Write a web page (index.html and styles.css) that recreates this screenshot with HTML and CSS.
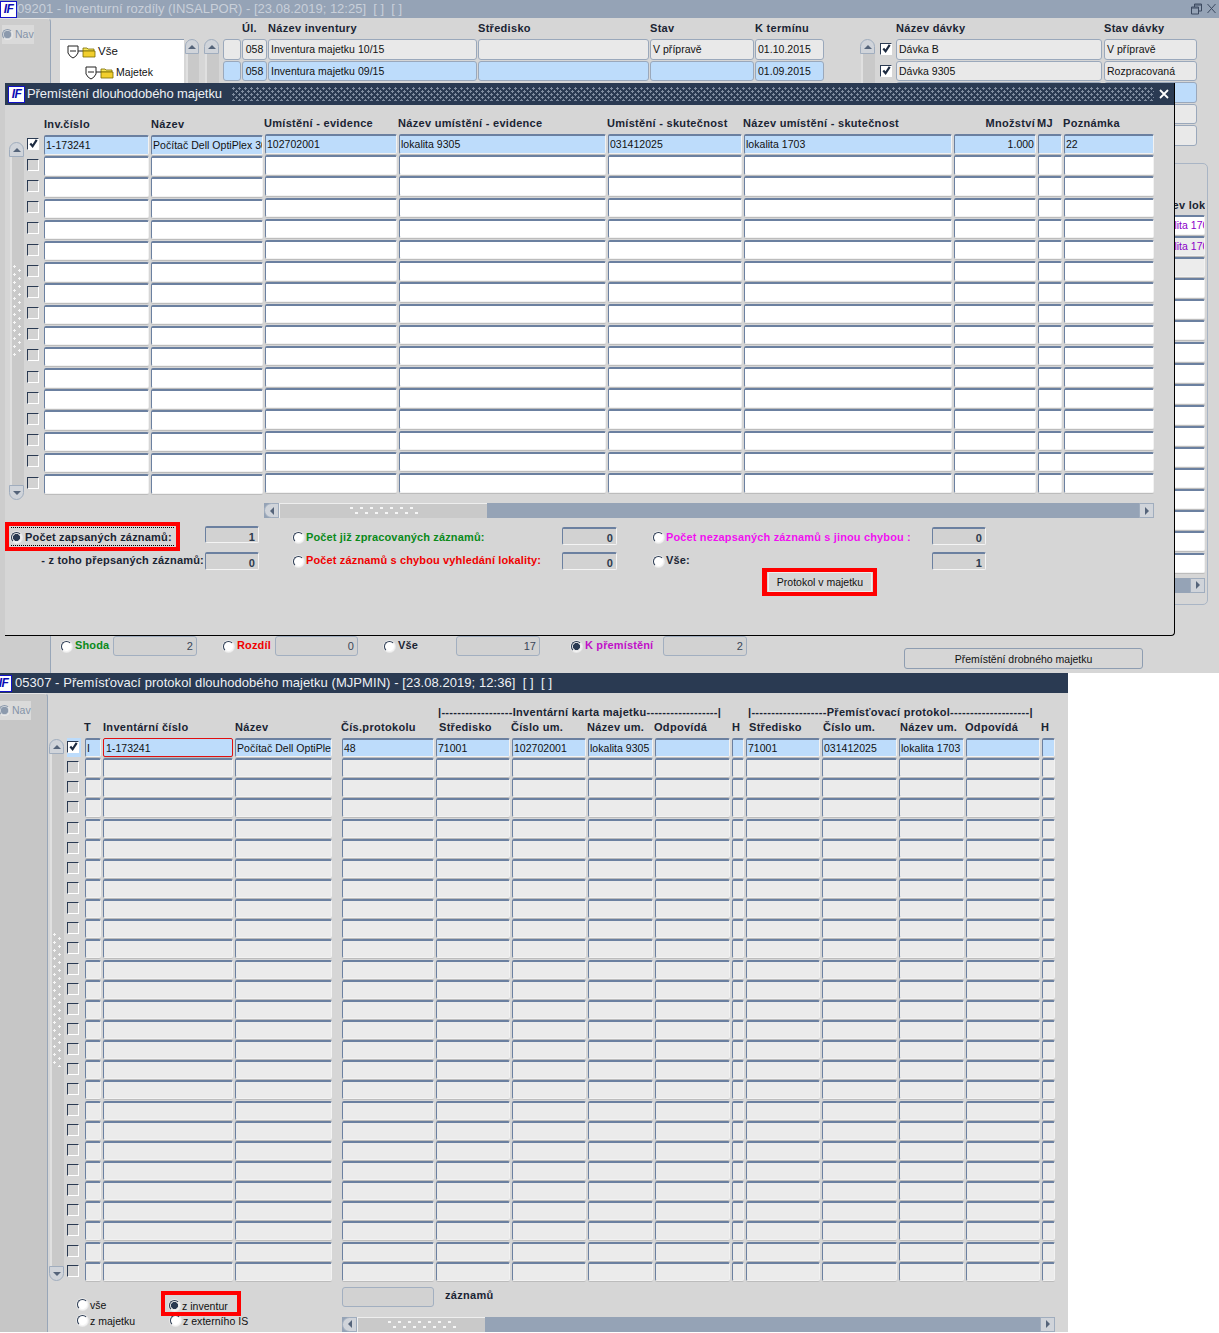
FILE: index.html
```html
<!DOCTYPE html>
<html lang="cs">
<head>
<meta charset="utf-8">
<title>Inventurní rozdíly</title>
<link rel="stylesheet" href="styles.css">
</head>
<body>
<div class="desk">

<section class="win win-top">
  <header class="tb tb-off"><span class="logo">IF</span><span class="tt">09201 - Inventurní rozdíly (INSALPOR) - [23.08.2019; 12:25]&nbsp; [ ]&nbsp; [ ]</span>
    <svg class="wbtn" viewBox="0 0 26 12"><path d="M1 4h7v7H1zM4 4V1h7v7H8M1 5h7M4 2h7"/><path d="M17 1l8 9M25 1l-8 9" /></svg>
  </header>
  <div class="wbody">
    <aside class="nav"><div class="navb"><span class="ra gray"></span>Nav</div></aside>
    <div class="main-top">
      <div class="upper">
        <div class="tree">
          <div class="node n0"><svg class="sh" viewBox="0 0 16 14"><path d="M1 1h10v7q-2 4-5 5q-3-1-5-5zM3 6h6M11 6h5"/></svg><svg class="fo" viewBox="0 0 14 12"><path class="f1" d="M1 2h4l1 1h6v2H1z"/><path class="f2" d="M1 11V5h12v6z"/></svg>Vše</div>
          <div class="node n1"><svg class="sh" viewBox="0 0 16 14"><path d="M1 1h10v7q-2 4-5 5q-3-1-5-5zM3 6h6M11 6h5"/></svg><svg class="fo" viewBox="0 0 14 12"><path class="f1" d="M1 2h4l1 1h6v2H1z"/><path class="f2" d="M1 11V5h12v6z"/></svg>Majetek</div>
        </div>
        <div class="vs vs-tree"><span class="au"></span><span class="tr"></span></div>
        <div class="vs vs-a"><span class="au"></span><span class="tr"></span></div>
        <div class="inv">
          <div class="ih"><b></b><b>Úl.</b><b>Název inventury</b><b>Středisko</b><b>Stav</b><b>K termínu</b></div>
          <div class="ir"><i></i><i>058</i><i>Inventura majetku 10/15</i><i></i><i>V přípravě</i><i>01.10.2015</i></div>
          <div class="ir sel"><i></i><i>058</i><i>Inventura majetku 09/15</i><i></i><i></i><i>01.09.2015</i></div>
        </div>
        <div class="vs vs-b"><span class="au"></span><span class="tr"></span></div>
        <div class="bat">
          <div class="bh"><b></b><b>Název dávky</b><b>Stav dávky</b></div>
          <div class="br2"><span class="cb on"><svg class="tick" viewBox="0 0 12 12"><path d="M2.5 6l2.5 3 4.5-7"/></svg></span><i>Dávka B</i><i>V přípravě</i></div>
          <div class="br2"><span class="cb on"><svg class="tick" viewBox="0 0 12 12"><path d="M2.5 6l2.5 3 4.5-7"/></svg></span><i>Dávka 9305</i><i>Rozpracovaná</i></div>
          <div class="br2 sel"><span></span><i></i><i></i></div>
          <div class="br2"><span></span><i></i><i></i></div>
          <div class="br2"><span></span><i></i><i></i></div>
        </div>
      </div>
      <div class="frame">
        <div class="fh">Název lokality</div>
        <div class="fr vio"><i>lokalita 1703</i></div>
        <div class="fr vio gr"><i>lokalita 1703</i></div>
        <div class="fr gr"><i></i></div>
        <div class="fr"><i></i></div><div class="fr"><i></i></div><div class="fr"><i></i></div><div class="fr"><i></i></div>
        <div class="fr"><i></i></div><div class="fr"><i></i></div><div class="fr"><i></i></div><div class="fr"><i></i></div>
        <div class="fr"><i></i></div><div class="fr"><i></i></div><div class="fr"><i></i></div><div class="fr"><i></i></div>
        <div class="fr"><i></i></div><div class="fr"><i></i></div>
        <div class="hs fhs"><span class="tk"></span><span class="ar"></span></div>
      </div>
      <div class="filt">
        <label class="rl lg"><span class="ra"></span>Shoda</label><span class="fld flat">2</span>
        <label class="rl lr"><span class="ra"></span>Rozdíl</label><span class="fld flat">0</span>
        <label class="rl"><span class="ra"></span>Vše</label><span class="fld flat">17</span>
        <label class="rl lm2"><span class="ra on"></span>K přemístění</label><span class="fld flat">2</span>
        <span></span><button class="btn btn-small">Přemístění drobného majetku</button>
      </div>
    </div>
  </div>
</section>

<section class="dlg">
  <header class="tb dtb"><span class="logo">IF</span><span class="tt">Přemístění dlouhodobého majetku</span><span class="pat"></span><svg class="dx" viewBox="0 0 10 10"><path d="M1 1l8 8M9 1l-8 8"/></svg></header>
  <div class="dtable">
    <div class="vs vs-d"><span class="au"></span><span class="tr"><span class="dots"></span></span><span class="ad"></span></div>
    <div class="dwrap">
      <div class="dg hd"><b></b><b class="lo">Inv.číslo</b><b class="lo">Název</b><b>Umístění - evidence</b><b>Název umístění - evidence</b><b>Umístění - skutečnost</b><b>Název umístění - skutečnost</b><b class="rt">Množství</b><b>MJ</b><b>Poznámka</b></div>
      <div class="dg r sel"><span class="cb on"><svg class="tick" viewBox="0 0 12 12"><path d="M2.5 6l2.5 3 4.5-7"/></svg></span><i class="lo">1-173241</i><i class="lo">Počítač Dell OptiPlex 3020</i><i>102702001</i><i>lokalita 9305</i><i>031412025</i><i>lokalita 1703</i><i class="rt">1.000</i><i></i><i>22</i></div>
      <div class="dg r"><span class="cb"></span><i class="lo"></i><i class="lo"></i><i></i><i></i><i></i><i></i><i></i><i></i><i></i></div>
      <div class="dg r"><span class="cb"></span><i class="lo"></i><i class="lo"></i><i></i><i></i><i></i><i></i><i></i><i></i><i></i></div>
      <div class="dg r"><span class="cb"></span><i class="lo"></i><i class="lo"></i><i></i><i></i><i></i><i></i><i></i><i></i><i></i></div>
      <div class="dg r"><span class="cb"></span><i class="lo"></i><i class="lo"></i><i></i><i></i><i></i><i></i><i></i><i></i><i></i></div>
      <div class="dg r"><span class="cb"></span><i class="lo"></i><i class="lo"></i><i></i><i></i><i></i><i></i><i></i><i></i><i></i></div>
      <div class="dg r"><span class="cb"></span><i class="lo"></i><i class="lo"></i><i></i><i></i><i></i><i></i><i></i><i></i><i></i></div>
      <div class="dg r"><span class="cb"></span><i class="lo"></i><i class="lo"></i><i></i><i></i><i></i><i></i><i></i><i></i><i></i></div>
      <div class="dg r"><span class="cb"></span><i class="lo"></i><i class="lo"></i><i></i><i></i><i></i><i></i><i></i><i></i><i></i></div>
      <div class="dg r"><span class="cb"></span><i class="lo"></i><i class="lo"></i><i></i><i></i><i></i><i></i><i></i><i></i><i></i></div>
      <div class="dg r"><span class="cb"></span><i class="lo"></i><i class="lo"></i><i></i><i></i><i></i><i></i><i></i><i></i><i></i></div>
      <div class="dg r"><span class="cb"></span><i class="lo"></i><i class="lo"></i><i></i><i></i><i></i><i></i><i></i><i></i><i></i></div>
      <div class="dg r"><span class="cb"></span><i class="lo"></i><i class="lo"></i><i></i><i></i><i></i><i></i><i></i><i></i><i></i></div>
      <div class="dg r"><span class="cb"></span><i class="lo"></i><i class="lo"></i><i></i><i></i><i></i><i></i><i></i><i></i><i></i></div>
      <div class="dg r"><span class="cb"></span><i class="lo"></i><i class="lo"></i><i></i><i></i><i></i><i></i><i></i><i></i><i></i></div>
      <div class="dg r"><span class="cb"></span><i class="lo"></i><i class="lo"></i><i></i><i></i><i></i><i></i><i></i><i></i><i></i></div>
      <div class="dg r"><span class="cb"></span><i class="lo"></i><i class="lo"></i><i></i><i></i><i></i><i></i><i></i><i></i><i></i></div>
      <div class="hs dhs"><span class="al"></span><span class="th th-d"><span class="dots dots-h"></span></span><span class="tk"></span><span class="ar"></span></div>
    </div>
  </div>
  <div class="stats">
    <div class="redbox focus"><label class="rl foc"><span class="ra on"></span>Počet zapsaných záznamů:</label></div>
    <span class="fld f1st">1</span>
    <label class="rl c3 lg"><span class="ra"></span>Počet již zpracovaných záznamů:</label>
    <span class="fld f2nd">0</span>
    <label class="rl c5 lm"><span class="ra"></span>Počet nezapsaných záznamů s jinou chybou :</label>
    <span class="fld f2nd">0</span>

    <span class="sub">- z toho přepsaných záznamů:</span>
    <span class="fld">0</span>
    <label class="rl c3 lr"><span class="ra"></span>Počet záznamů s chybou vyhledání lokality:</label>
    <span class="fld">0</span>
    <label class="rl c5"><span class="ra"></span>Vše:</label>
    <span class="fld">1</span>

    <div class="redbtn"><button class="btn">Protokol v majetku</button></div>
  </div>
</section>

<section class="win win-bot">
  <header class="tb"><span class="logo clip">IF</span><span class="tt">05307 - Přemísťovací protokol dlouhodobého majetku (MJPMIN) - [23.08.2019; 12:36]&nbsp; [ ]&nbsp; [ ]</span></header>
  <div class="wbody">
    <aside class="nav nav-b"><div class="navb"><span class="ra gray"></span>Nav</div></aside>
    <div class="main-bot">
      <div class="btable">
        <div class="vs vs-bt"><span class="au"></span><span class="tr"><span class="dots"></span></span><span class="ad"></span></div>
        <div class="bwrap">
          <div class="bg hd1"><b class="s1">|------------------Inventární karta majetku------------------|</b><b class="s2">|-------------------Přemísťovací protokol--------------------|</b></div>
          <div class="bg hd2"><b></b><b>T</b><b>Inventární číslo</b><b>Název</b><b>Čís.protokolu</b><b>Středisko</b><b>Číslo um.</b><b>Název um.</b><b>Odpovídá</b><b>H</b><b>Středisko</b><b>Číslo um.</b><b>Název um.</b><b>Odpovídá</b><b>H</b></div>
          <div class="bg r gy sel"><span class="cw"><span class="cb on"><svg class="tick" viewBox="0 0 12 12"><path d="M2.5 6l2.5 3 4.5-7"/></svg></span></span><i>I</i><i class="cur">1-173241</i><i>Počítač Dell OptiPlex 3020</i><i>48</i><i>71001</i><i>102702001</i><i>lokalita 9305</i><i></i><i></i><i>71001</i><i>031412025</i><i>lokalita 1703</i><i></i><i></i></div>
          <div class="bg r gy"><span class="cb"></span><i></i><i></i><i></i><i></i><i></i><i></i><i></i><i></i><i></i><i></i><i></i><i></i><i></i><i></i></div>
          <div class="bg r gy"><span class="cb"></span><i></i><i></i><i></i><i></i><i></i><i></i><i></i><i></i><i></i><i></i><i></i><i></i><i></i><i></i></div>
          <div class="bg r gy"><span class="cb"></span><i></i><i></i><i></i><i></i><i></i><i></i><i></i><i></i><i></i><i></i><i></i><i></i><i></i><i></i></div>
          <div class="bg r gy"><span class="cb"></span><i></i><i></i><i></i><i></i><i></i><i></i><i></i><i></i><i></i><i></i><i></i><i></i><i></i><i></i></div>
          <div class="bg r gy"><span class="cb"></span><i></i><i></i><i></i><i></i><i></i><i></i><i></i><i></i><i></i><i></i><i></i><i></i><i></i><i></i></div>
          <div class="bg r gy"><span class="cb"></span><i></i><i></i><i></i><i></i><i></i><i></i><i></i><i></i><i></i><i></i><i></i><i></i><i></i><i></i></div>
          <div class="bg r gy"><span class="cb"></span><i></i><i></i><i></i><i></i><i></i><i></i><i></i><i></i><i></i><i></i><i></i><i></i><i></i><i></i></div>
          <div class="bg r gy"><span class="cb"></span><i></i><i></i><i></i><i></i><i></i><i></i><i></i><i></i><i></i><i></i><i></i><i></i><i></i><i></i></div>
          <div class="bg r gy"><span class="cb"></span><i></i><i></i><i></i><i></i><i></i><i></i><i></i><i></i><i></i><i></i><i></i><i></i><i></i><i></i></div>
          <div class="bg r gy"><span class="cb"></span><i></i><i></i><i></i><i></i><i></i><i></i><i></i><i></i><i></i><i></i><i></i><i></i><i></i><i></i></div>
          <div class="bg r gy"><span class="cb"></span><i></i><i></i><i></i><i></i><i></i><i></i><i></i><i></i><i></i><i></i><i></i><i></i><i></i><i></i></div>
          <div class="bg r gy"><span class="cb"></span><i></i><i></i><i></i><i></i><i></i><i></i><i></i><i></i><i></i><i></i><i></i><i></i><i></i><i></i></div>
          <div class="bg r gy"><span class="cb"></span><i></i><i></i><i></i><i></i><i></i><i></i><i></i><i></i><i></i><i></i><i></i><i></i><i></i><i></i></div>
          <div class="bg r gy"><span class="cb"></span><i></i><i></i><i></i><i></i><i></i><i></i><i></i><i></i><i></i><i></i><i></i><i></i><i></i><i></i></div>
          <div class="bg r gy"><span class="cb"></span><i></i><i></i><i></i><i></i><i></i><i></i><i></i><i></i><i></i><i></i><i></i><i></i><i></i><i></i></div>
          <div class="bg r gy"><span class="cb"></span><i></i><i></i><i></i><i></i><i></i><i></i><i></i><i></i><i></i><i></i><i></i><i></i><i></i><i></i></div>
          <div class="bg r gy"><span class="cb"></span><i></i><i></i><i></i><i></i><i></i><i></i><i></i><i></i><i></i><i></i><i></i><i></i><i></i><i></i></div>
          <div class="bg r gy"><span class="cb"></span><i></i><i></i><i></i><i></i><i></i><i></i><i></i><i></i><i></i><i></i><i></i><i></i><i></i><i></i></div>
          <div class="bg r gy"><span class="cb"></span><i></i><i></i><i></i><i></i><i></i><i></i><i></i><i></i><i></i><i></i><i></i><i></i><i></i><i></i></div>
          <div class="bg r gy"><span class="cb"></span><i></i><i></i><i></i><i></i><i></i><i></i><i></i><i></i><i></i><i></i><i></i><i></i><i></i><i></i></div>
          <div class="bg r gy"><span class="cb"></span><i></i><i></i><i></i><i></i><i></i><i></i><i></i><i></i><i></i><i></i><i></i><i></i><i></i><i></i></div>
          <div class="bg r gy"><span class="cb"></span><i></i><i></i><i></i><i></i><i></i><i></i><i></i><i></i><i></i><i></i><i></i><i></i><i></i><i></i></div>
          <div class="bg r gy"><span class="cb"></span><i></i><i></i><i></i><i></i><i></i><i></i><i></i><i></i><i></i><i></i><i></i><i></i><i></i><i></i></div>
          <div class="bg r gy"><span class="cb"></span><i></i><i></i><i></i><i></i><i></i><i></i><i></i><i></i><i></i><i></i><i></i><i></i><i></i><i></i></div>
          <div class="bg r gy"><span class="cb"></span><i></i><i></i><i></i><i></i><i></i><i></i><i></i><i></i><i></i><i></i><i></i><i></i><i></i><i></i></div>
          <div class="bg r gy"><span class="cb"></span><i></i><i></i><i></i><i></i><i></i><i></i><i></i><i></i><i></i><i></i><i></i><i></i><i></i><i></i></div>
        </div>
      </div>
      <div class="bfoot">
        <div class="rcol1">
          <label class="rl pl"><span class="ra"></span>vše</label>
          <label class="rl pl"><span class="ra"></span>z majetku</label>
        </div>
        <div class="rcol2">
          <div class="redbox2"><label class="rl pl"><span class="ra on"></span>z inventur</label></div>
          <label class="rl pl ext"><span class="ra"></span>z externího IS</label>
        </div>
        <div class="rcol3">
          <div class="cnt"><span class="fld flat cntf"></span><b>záznamů</b></div>
          <div class="hs bhs"><span class="al"></span><span class="th th-b"><span class="dots dots-h"></span></span><span class="tk"></span><span class="ar"></span></div>
        </div>
      </div>
    </div>
  </div>
</section>

</div>
</body>
</html>
```

FILE: styles.css
```css
* { box-sizing: border-box; }
html, body { margin: 0; padding: 0; background: #fff; }
body { font: 10.5px/1.2 "Liberation Sans", Arial, sans-serif; color: #111; letter-spacing: .03px; }
b { font: 700 11px/1.2 "Liberation Sans", Arial, sans-serif; letter-spacing: .3px; color: #1a2433; white-space: nowrap; }
i { font-style: normal; }
.desk { position: relative; width: 1219px; height: 1333px; overflow: hidden; }

/* windows */
.win { position: absolute; left: 0; background: #d6d6d6; overflow: hidden; display: flex; flex-direction: column; }
.win-top { top: 0; width: 1219px; height: 673px; }
.win-bot { top: 673px; width: 1068px; height: 659px; }
.wbody { flex: 1; display: flex; min-height: 0; }

.tb { flex: none; display: flex; align-items: center; height: 20px; background: #2a3a52; color: #eef1f5; }
.tb-off { height: 18px; background: #95a3b6; color: #c9d0da; }
.tt { font-size: 13px; letter-spacing: .06px; white-space: pre; padding-left: 3px; }
.tb-off .tt { letter-spacing: 0; padding-left: 0; }
.logo { flex: none; width: 17px; height: 17px; background: #fff; border: 1px solid #1212c8; color: #0a0ab4; font: italic 700 12px/15px "Liberation Sans", Arial, sans-serif; text-align: center; letter-spacing: -.5px; }
.logo.clip { margin-left: -5px; }
.wbtn { margin-left: auto; margin-right: 2px; width: 27px; height: 12px; fill: none; stroke: #3c4a60; stroke-width: 1; }

/* nav strip */
.nav { flex: none; width: 51px; background: #cdcdcd; border-right: 1px solid #98a6b8; padding: 6px 0 0 2px; border-top: 1px solid #e4e4e4; border-top-right-radius: 4px; }
.nav-b { width: 48px; background: #c6c6c6; padding: 7px 0 0 0; }
.navb { display: flex; align-items: center; gap: 2px; width: 32px; height: 19px; background: #dadada; color: #8493a8; font-size: 10.5px; letter-spacing: 0; }
.nav-b .navb { margin-left: -1px; }

/* radios / checks */
.ra { flex: none; display: inline-block; width: 11px; height: 11px; border-radius: 50%; background: #fff; border: 1px solid; border-color: #2a3a52 #f4f4f4 #f4f4f4 #2a3a52; box-shadow: 0 0 0 1px #e9e9e9; }
.ra.on { background: radial-gradient(circle, #2a3a52 0 3.2px, #e8e8e8 3.8px); }
.ra.gray { background: radial-gradient(circle, #8c9aad 0 3.4px, #cfd4da 4px); border-color: #8c9aad #e8e8e8 #e8e8e8 #8c9aad; box-shadow: none; }
.rl { display: inline-flex; align-items: center; gap: 3px; font: 700 11px/1.2 "Liberation Sans", Arial, sans-serif; letter-spacing: .14px; white-space: nowrap; color: #1a2433; }
.lg { color: #0a8a1a; }
.lr { color: #f00000; }
.lm { color: #f010f0; }
.lm2 { color: #c010c8; }

.cb { display: block; width: 12px; height: 12px; align-self: center; background: #d2d2d2; border: 1px solid; border-color: #2a3a52 #fff #fff #2a3a52; }
.cb.on { background: #fff; }
.tick { display: block; width: 11px; height: 11px; margin: -1px 0 0 -.5px; fill: none; stroke: #1c2a40; stroke-width: 2.4; }

/* field */
.fld { display: block; height: 18px; padding: 1px 3px 0 0; text-align: right; line-height: 16px; font-size: 11px; color: #2d3a4d; font-weight: 700; background: #d2d2d2; border: 1px solid; border-color: #6b80a0 #f4f4f4 #f4f4f4 #6b80a0; border-top-width: 2px; border-radius: 2px; }
.fld.flat { height: 20px; font-weight: 400; color: #3a4657; border: 1px solid #a2afc0; border-radius: 3px; line-height: 18px; padding-top: 0; }

/* scrollbars */
.vs { display: flex; flex-direction: column; width: 15px; flex: none; }
.au, .ad { flex: none; height: 15px; background: #d0d4da; border: 1px solid #a0adbe; display: flex; align-items: center; justify-content: center; }
.au { border-radius: 8px 8px 0 0; }
.ad { border-radius: 0 0 8px 8px; }
.au::after { content: ""; border: 4px solid transparent; border-bottom: 4px solid #55647a; border-top: 0; }
.ad::after { content: ""; border: 4px solid transparent; border-top: 4px solid #55647a; border-bottom: 0; }
.tr { flex: 1; background: linear-gradient(90deg, #d6d6d6 0 1px, #e0e0e0 1px 3px, #c9c9c9 3px); display: flex; align-items: center; justify-content: center; }
.dots { display: block; width: 10px; height: 92px; margin: -20px 0 0 2px; background-image: radial-gradient(circle at 1.5px 1.5px, #f6f6f6 1.2px, transparent 1.4px), radial-gradient(circle at 6.5px 5.5px, #f6f6f6 1.2px, transparent 1.4px); background-size: 10px 8px; }
.hs { display: flex; height: 15px; background: #95a3b6; }
.al, .ar { flex: none; width: 15px; background: #d0d4da; border: 1px solid #a0adbe; display: flex; align-items: center; justify-content: center; }
.al { border-radius: 8px 0 0 8px; }
.al::after { content: ""; border: 4px solid transparent; border-right: 4px solid #55647a; border-left: 0; }
.ar::after { content: ""; border: 4px solid transparent; border-left: 4px solid #55647a; border-right: 0; }
.th { flex: none; background: #c9c9c9; border-top: 1px solid #eee; border-left: 1px solid #eee; display: flex; align-items: center; justify-content: center; }
.th-d { width: 208px; }
.th-b { width: 128px; }
.tk { flex: 1; }
.dots-h { width: 68px; height: 10px; margin: 0; background-size: 10px 10px; background-image: radial-gradient(circle at 1.5px 2px, #f6f6f6 1.2px, transparent 1.4px), radial-gradient(circle at 6.5px 7px, #f6f6f6 1.2px, transparent 1.4px); }

/* cells */
.r i, .ir i, .br2 i, .fr i { display: block; overflow: hidden; white-space: nowrap; padding: 0 0 0 1px; line-height: 16px; background: #fff; border: 1px solid; border-color: #6b80a0 #f2f2f2 #f2f2f2 #6b80a0; border-top-width: 2px; border-radius: 2px; box-shadow: 0 1px 0 #bcbcbc; }
.sel i { background: #bddcfb; }
.r.gy i { background: #ebebeb; }
.r.gy.sel i { background: #bddcfb; }

/* top window content */
.main-top { flex: 1; min-width: 0; }
.upper { display: flex; height: 145px; padding: 21px 0 0 9px; overflow: hidden; }
.tree { flex: none; width: 124px; height: 60px; background: #fff; padding-top: 1px; border-top: 1px solid #8e9db1; }
.node { display: flex; align-items: center; height: 21px; gap: 2px; }
.n0 { padding-left: 7px; font-size: 11.5px; }
.n1 { padding-left: 25px; font-size: 10.5px; }
.sh { width: 16px; height: 14px; margin-right: -3px; fill: #fff; stroke: #222; stroke-width: 1; }
.fo { width: 14px; height: 12px; }
.f1 { fill: #f7e75a; stroke: #7a6a00; stroke-width: .8; }
.f2 { fill: #f2cf2e; stroke: #7a6a00; stroke-width: .8; }
.vs-tree { width: 14px; margin-left: 1px; height: 60px; }
.vs-a { margin-left: 5px; height: 70px; }
.inv { flex: none; width: 603px; margin-left: 4px; margin-top: -17px; }
.ih, .ir { display: grid; grid-template-columns: 18px 25px 209px 171px 104px 69px; column-gap: 1px; }
.ih { height: 17px; align-items: start; }
.ir { height: 21.5px; padding-bottom: 1px; }
.ir i, .br2 i { border: 1px solid #9aa8bb; border-radius: 3px; box-shadow: none; background: #e9e9e9; line-height: 18px; padding-left: 2px; }
.ir.sel i, .br2.sel i { background: #bddcfb; }
.ir i:nth-child(2) { text-align: center; padding: 0; }
.vs-b { margin-left: 34px; height: 70px; }
.bat { flex: none; width: 317px; margin-left: 5px; margin-top: -17px; }
.bh, .br2 { display: grid; grid-template-columns: 14px 206px 93px; column-gap: 2px; }
.bh { height: 17px; align-items: start; }
.br2 { height: 21.5px; padding-bottom: 1px; }

.frame { width: 608px; height: 442px; margin-left: 549px; border: 1px solid #a9b5c5; border-radius: 5px; padding: 35px 3px 0 0; overflow: hidden; }
.fh, .fr { margin-left: 549px; width: 55px; }
.fh { font: 700 11px/1.2 "Liberation Sans", Arial, sans-serif; height: 16px; margin-left: 551px; width: 53px; letter-spacing: .3px; color: #1a2433; white-space: nowrap; overflow: hidden; }
.fr { height: 21.1px; }
.fr i { height: 20px; padding-left: 4px; }
.vio i { color: #8a00c8; }
.gr i { background: #ececec; }
.fhs { margin: 4px 0 0 549px; width: 55px; }

.filt { display: grid; grid-template-columns: 52px 84px 78px 83px 98px 84px 123px 84px 157px 239px; height: 33px; margin-left: 10px; margin-top: 31px; align-items: start; }
.filt .rl { height: 20px; }
.filt .rl:nth-child(3), .filt .rl:nth-child(5) { padding-left: 26px; }
.filt .rl:nth-child(7) { padding-left: 31px; }
.btn-small { align-self: end; height: 21px; }
.btn { font: 10.5px "Liberation Sans", Arial, sans-serif; letter-spacing: 0; color: #111; background: #d6d6d6; border: 1px solid #8e9db1; border-radius: 3px; padding: 0; white-space: nowrap; }

/* dialog */
.dlg { position: absolute; left: 5px; top: 83px; width: 1170px; height: 553px; background: #d6d6d6; border-right: 1px solid #000; border-bottom: 1px solid #000; border-bottom-right-radius: 4px; display: flex; flex-direction: column; }
.dtb { height: 22px; padding-left: 3px; }
.dtb .tt { letter-spacing: -.1px; padding-left: 2px; }
.pat { flex: 1; height: 14px; margin: 0 2px 0 10px; background-image: radial-gradient(circle at 1.5px 1.5px, #7f8c9f 1px, transparent 1.2px), radial-gradient(circle at 4.5px 4.5px, #7f8c9f 1px, transparent 1.2px); background-size: 6px 6px; }
.dx { flex: none; width: 10px; height: 10px; margin: 0 5px 0 3px; fill: none; stroke: #fff; stroke-width: 1.8; }
.dtable { display: flex; padding-left: 4px; height: 412px; gap: 3px; }
.vs-d { height: 358px; margin-top: 37px; }
.dwrap { flex: none; width: 1127px; padding-top: 12px; }
.dg { display: grid; grid-template-columns: 15px 105px 112px 132px 207px 134px 208px 82px 24px 90px; column-gap: 2px; }
.hd { height: 17px; align-items: start; }
.hd b:not(.lo):not(.rt) { margin-left: -1px; }
.r.dg { height: 21.2px; }
.r.dg i { height: 19.5px; }
.lo { margin-top: 1px; }
.rt { text-align: right; padding-right: 1px !important; }
.dhs { margin: 9px 0 0 237px; width: 890px; }
.r .cb { margin-top: -2px; }

.stats { display: grid; grid-template-columns: 200px 54px 34px 269px 55px 36px 279px 54px; grid-template-rows: 30px 17px 29px; margin-top: 5px; }
.stats .fld { align-self: start; height: 18px; }
.stats .rl { padding-top: 1px; }
.stats .c3, .stats .c5 { gap: 2px; }
.stats .fld.f1st { margin-top: 4px; height: 17px; }
.f2nd { margin-top: 5px; }
.redbox { width: 175px; height: 29px; border: 4px solid #f00; padding: 1px 2px; }
.stats .foc { height: 19px; width: 100%; border-top: 1px dotted #000; border-bottom: 1px dotted #000; padding: 2px 0 0 0; letter-spacing: .18px; }
.c3 { grid-column: 4; }
.c5 { grid-column: 7; }
.sub { font: 700 11px/1.2 "Liberation Sans", Arial, sans-serif; letter-spacing: .2px; color: #1a2433; text-align: right; align-self: center; white-space: nowrap; padding-right: 1px; }
.redbtn { grid-column: 7 / 9; grid-row: 3; margin: -1px 0 0 109px; width: 115px; height: 28px; border: 4px solid #f00; border-left-width: 5px; padding: 0 1px; display: flex; }
.redbtn .btn { flex: 1; border-color: #eee; border-radius: 1px; }

/* bottom window content */
.main-bot { flex: 1; min-width: 0; padding-left: 1px; }
.btable { display: flex; gap: 3px; }
.vs-bt { margin-top: 46px; height: 542px; }
.vs-bt .dots { height: 134px; }
.bwrap { flex: none; width: 988px; padding-top: 13px; }
.bg { display: grid; grid-template-columns: 16px 16px 130px 105px 92px 74px 74px 65px 75px 12px 74px 75px 65px 74px 13px; column-gap: 2px; }
.r.gy > :nth-child(4) { margin-right: 8px; }
.hd1 { height: 15px; }
.hd1 b { letter-spacing: .3px; }
.s1 { grid-column: 6 / 11; margin-left: 2px; }
.s2 { grid-column: 11 / 16; margin-left: 2px; }
.hd2 { height: 17px; }
.hd2 b:nth-child(2) { margin-left: -1px; }
.hd2 b:nth-child(5), .hd2 b:nth-child(7), .hd2 b:nth-child(8), .hd2 b:nth-child(9), .hd2 b:nth-child(14), .hd2 b:nth-child(15) { margin-left: -1px; }
.hd2 b:nth-child(6), .hd2 b:nth-child(11) { margin-left: 3px; }
.hd2 b:nth-child(12), .hd2 b:nth-child(13) { margin-left: 1px; }
.r.gy { height: 20.15px; }
.r.gy i { height: 19px; line-height: 17px; }
.cw { display: flex; align-items: center; justify-content: flex-start; background: #bddcfb; height: 19px; margin-right: 2px; }
.r.gy .cur { border: 1px solid #e01010; padding-left: 2px; line-height: 19px; }
.bfoot { display: flex; margin-top: 5px; }
.rcol1 { flex: none; width: 112px; padding: 10px 0 0 28px; display: flex; flex-direction: column; }
.rl.pl { font: 400 10.5px/1.2 "Liberation Sans", Arial, sans-serif; letter-spacing: .03px; height: 16px; color: #111; gap: 2px; }
.rcol2 { flex: none; width: 181px; padding-top: 4px; }
.redbox2 { position: relative; z-index: 1; width: 80px; height: 25px; border: 4px solid #f00; padding: 3px 0 0 4px; }
.ext { margin: -3px 0 0 9px; }
.rcol3 { flex: none; width: 713px; }
.cnt { display: flex; gap: 11px; height: 30px; align-items: flex-start; }
.cntf { width: 92px; height: 20px !important; }
.cnt b { margin-top: 2px; }
.bhs { width: 713px; }
```
